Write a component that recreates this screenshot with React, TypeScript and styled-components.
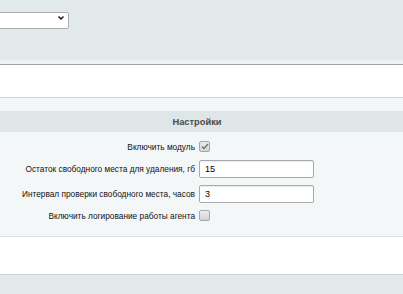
import React, { FC, useState } from 'react';
import styled, { createGlobalStyle } from 'styled-components';

const GlobalStyle = createGlobalStyle`
  html, body {
    margin: 0;
    padding: 0;
    background: #e2e9eb;
    font-family: 'Liberation Sans', Arial, sans-serif;
  }
`;

const Page = styled.div`
  width: 403px;
  height: 294px;
  overflow: hidden;
  display: flex;
  flex-direction: column;
`;

const TopBar = styled.div`
  height: 60px;
  background: #e2e9eb;
  padding-top: 9px;
  box-sizing: border-box;
`;

const SelectWrap = styled.div`
  position: relative;
  width: 80px;
  height: 17px;
  margin-left: -11px;
`;

const Select = styled.select`
  appearance: none;
  width: 100%;
  height: 100%;
  box-sizing: border-box;
  border: 1px solid #a9adaf;
  border-radius: 2px;
  background: #fff;
  font: 9px 'Liberation Sans', Arial, sans-serif;
`;

const Chevron = styled.svg`
  position: absolute;
  right: 5px;
  top: 7px;
  pointer-events: none;
`;

const Divider = styled.div`
  height: 5px;
  background: #eef2f3;
  border-bottom: 1px solid #9fa4a6;
  box-sizing: border-box;
`;

const WhiteStrip = styled.div<{ h: number; line: string }>`
  height: ${p => p.h}px;
  background: #fff;
  border-bottom: 1px solid ${p => p.line};
  box-sizing: border-box;
`;

const Spacer = styled.div`
  height: 13px;
  background: #f4f7f8;
`;

const Header = styled.div`
  height: 21px;
  background: #dee6e8;
  display: flex;
  align-items: center;
  justify-content: center;
  padding-right: 9px;
  font-size: 9.3px;
  font-weight: bold;
  color: #4b4b4b;
`;

const Body = styled.div`
  height: 105px;
  background: #f4f7f8;
  border-bottom: 1px solid #d9e1e3;
  box-sizing: border-box;
  padding-top: 5px;
  display: flex;
  flex-direction: column;
`;

const Row = styled.div<{ tall?: boolean }>`
  display: grid;
  grid-template-columns: 195px auto;
  column-gap: 4px;
  align-items: center;
  height: ${p => (p.tall ? 25 : 19)}px;
`;

const Label = styled.label`
  text-align: right;
  font-size: 8.3px;
  color: #111;
  white-space: nowrap;
`;

const TextInput = styled.input`
  width: 115px;
  height: 18px;
  box-sizing: border-box;
  border: 1px solid #a7abad;
  border-radius: 2px;
  box-shadow: inset 0 1px 1px rgba(0, 0, 0, 0.08);
  background: #fff;
  padding: 0 5px;
  font: 9px 'Liberation Sans', Arial, sans-serif;
  color: #000;
  outline: none;
`;

const Box = styled.span<{ checked: boolean }>`
  width: 11px;
  height: 11px;
  box-sizing: border-box;
  border: 1px solid #a3a8aa;
  border-radius: 2px;
  background: linear-gradient(#e9ecee, #cfd4d6);
  display: flex;
  align-items: center;
  justify-content: center;
  cursor: pointer;
`;

const Bottom = styled.div`
  flex: 1;
  background: #e2e9eb;
`;

interface CheckProps {
  checked: boolean;
  onToggle: () => void;
}

const Check: FC<CheckProps> = ({ checked, onToggle }) => (
  <Box checked={checked} onClick={onToggle}>
    {checked && (
      <svg width="8" height="7" viewBox="0 0 8 7">
        <path d="M1 3.5 L3 5.5 L7 1" fill="none" stroke="#6d7274" strokeWidth="1.3" />
      </svg>
    )}
  </Box>
);

const App: FC = () => {
  const [enabled, setEnabled] = useState(true);
  const [logging, setLogging] = useState(false);
  const [space, setSpace] = useState('15');
  const [interval, setIntervalValue] = useState('3');

  return (
    <Page>
      <GlobalStyle />
      <TopBar>
        <SelectWrap>
          <Select>
            <option value="" />
          </Select>
          <Chevron width="6" height="4" viewBox="0 0 6 4">
            <path d="M0.5 0.5 L3 3 L5.5 0.5" fill="none" stroke="#111" strokeWidth="1.4" />
          </Chevron>
        </SelectWrap>
      </TopBar>
      <Divider />
      <WhiteStrip h={33} line="#cdd3d5" />
      <Spacer />
      <Header>Настройки</Header>
      <Body>
        <Row>
          <Label>Включить модуль</Label>
          <Check checked={enabled} onToggle={() => setEnabled(!enabled)} />
        </Row>
        <Row tall>
          <Label>Остаток свободного места для удаления, гб</Label>
          <TextInput value={space} onChange={e => setSpace(e.target.value)} />
        </Row>
        <Row tall>
          <Label>Интервал проверки свободного места, часов</Label>
          <TextInput value={interval} onChange={e => setIntervalValue(e.target.value)} />
        </Row>
        <Row>
          <Label>Включить логирование работы агента</Label>
          <Check checked={logging} onToggle={() => setLogging(!logging)} />
        </Row>
      </Body>
      <WhiteStrip h={38} line="#c9d0d2" />
      <Bottom />
    </Page>
  );
};

export default App;
